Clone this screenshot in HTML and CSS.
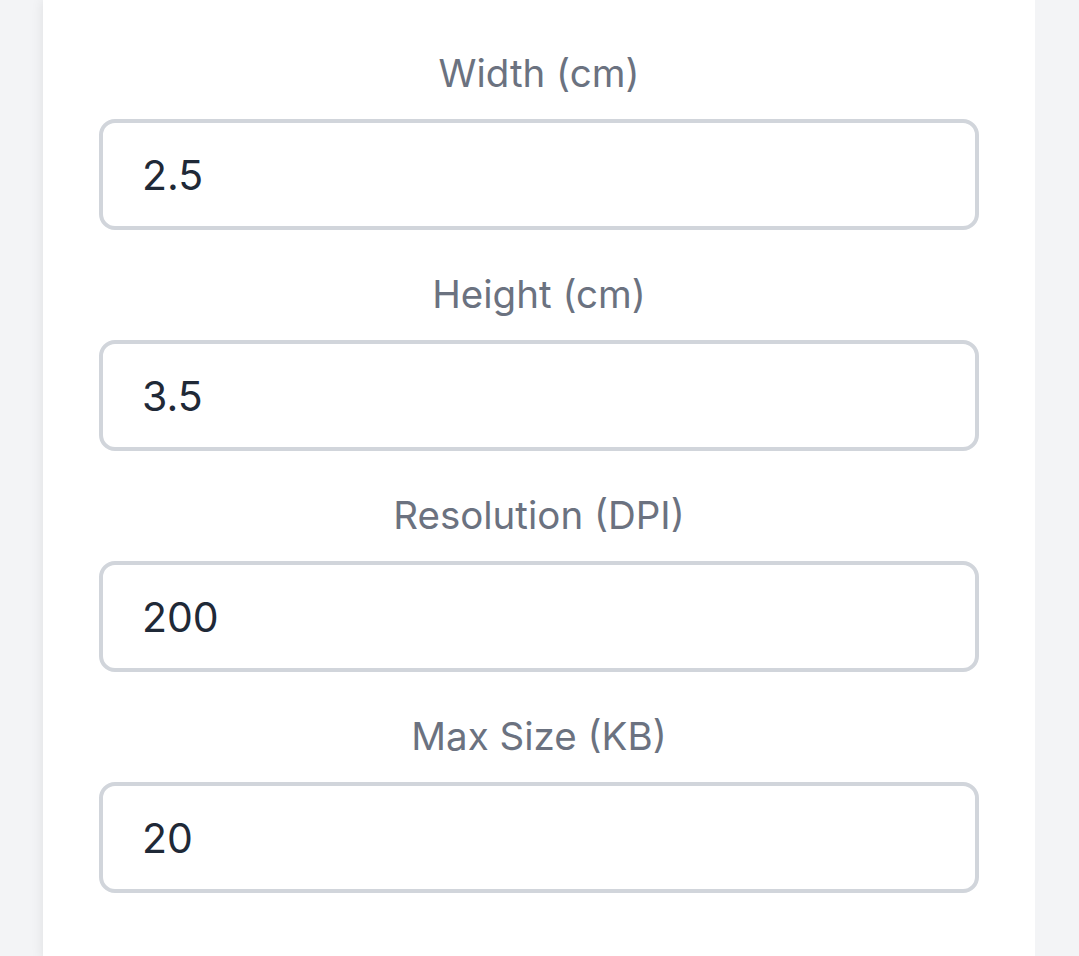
FILE: index.html
```html
<!DOCTYPE html>
<html lang="en">
<head>
<meta charset="utf-8">
<title>Photo settings</title>
<link rel="stylesheet" href="styles.css">
</head>
<body>
<div class="page">
  <form class="card">
    <div class="field">
      <label class="label" for="w">Width (cm)</label>
      <input class="input" id="w" type="text" value="2.5">
    </div>
    <div class="field">
      <label class="label" for="h">Height (cm)</label>
      <input class="input" id="h" type="text" value="3.5">
    </div>
    <div class="field">
      <label class="label" for="r">Resolution (DPI)</label>
      <input class="input" id="r" type="text" value="200">
    </div>
    <div class="field">
      <label class="label" for="s">Max Size (KB)</label>
      <input class="input" id="s" type="text" value="20">
    </div>
  </form>
</div>
</body>
</html>
```
FILE: styles.css
```css
html, body {
  margin: 0;
  padding: 0;
  background: #f3f4f6;
  font-family: Inter, "Noto Sans", sans-serif;
}
.page {
  padding-left: 43px;
  width: 992px;
  height: 956px;
  overflow: hidden;
}
.card {
  background: #ffffff;
  box-shadow: 0 0 12px rgba(0, 0, 0, 0.09);
  padding: 49px 56px 60px;
  display: flex;
  flex-direction: column;
  gap: 40px;
  min-height: 960px;
  box-sizing: border-box;
}
.field {
  display: flex;
  flex-direction: column;
}
.label {
  display: block;
  text-align: center;
  color: #6b7280;
  font-size: 38.5px;
  line-height: 48px;
  margin-bottom: 22px;
}
.input {
  box-sizing: border-box;
  height: 111px;
  width: 100%;
  border: 4px solid #d1d5db;
  border-radius: 16px;
  padding: 0 39px;
  font-family: Inter, "Noto Sans", sans-serif;
  font-size: 41px;
  color: #1f2937;
  background: #fff;
  outline: none;
}
```
